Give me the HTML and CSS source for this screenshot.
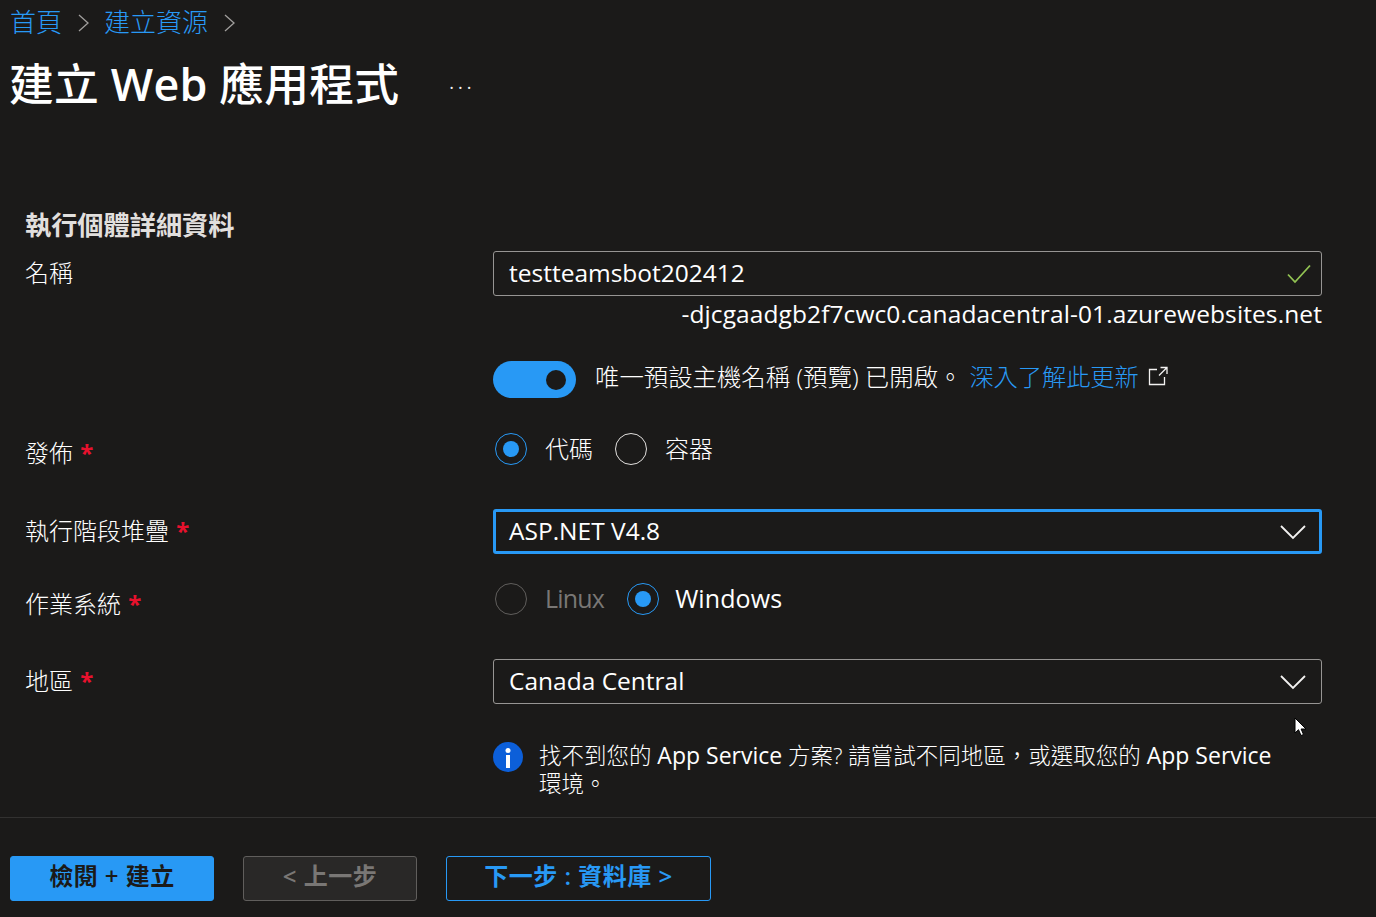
FILE: index.html
```html
<!DOCTYPE html>
<html lang="zh-Hant">
<head>
<meta charset="utf-8">
<title>建立 Web 應用程式</title>
<link rel="stylesheet" href="styles.css">
</head>
<body>
<div class="page">
  <nav class="crumbs">
    <a class="link">首頁</a>
    <svg class="crumb-sep" viewBox="0 0 11 18"><path d="M1 1 10 9 1 17"/></svg>
    <a class="link">建立資源</a>
    <svg class="crumb-sep" viewBox="0 0 11 18"><path d="M1 1 10 9 1 17"/></svg>
  </nav>
  <header class="title-row">
    <h1 class="title">建立 <span class="title-latin">Web</span> 應用程式</h1>
    <span class="more">···</span>
  </header>
  <main class="form">
    <h2 class="section">執行個體詳細資料</h2>
    <div class="row row-name">
      <div class="label">名稱</div>
      <div class="control">
        <div class="field"><span>testteamsbot202412</span>
          <svg class="check" viewBox="0 0 24 20"><path d="M1 10.500 8 18 23 1.500"/></svg>
        </div>
        <div class="host">-djcgaadgb2f7cwc0.canadacentral-01.azurewebsites.net</div>
      </div>
    </div>
    <div class="row row-toggle">
      <div class="label"></div>
      <div class="control toggle-line">
        <span class="toggle"><span class="knob"></span></span>
        <span class="toggle-text">唯一預設主機名稱 (預覽) 已開啟。</span>
        <a class="link learn">深入了解此更新</a>
        <svg class="ext" viewBox="0 0 20 20"><path d="M9 3.500H1.500v15h15V11M11 9.500 19 1.500M12.500 1.500H19V8"/></svg>
      </div>
    </div>
    <div class="row row-publish">
      <div class="label">發佈 <span class="req">*</span></div>
      <div class="control radios">
        <span class="radio on"></span><span class="radio-label code">代碼</span>
        <span class="radio"></span><span class="radio-label">容器</span>
      </div>
    </div>
    <div class="row row-stack">
      <div class="label">執行階段堆疊 <span class="req">*</span></div>
      <div class="control">
        <div class="field focus"><span>ASP.NET V4.8</span>
          <svg class="chev" viewBox="0 0 26 16"><path d="M1 2 13 14 25 2"/></svg>
        </div>
      </div>
    </div>
    <div class="row row-os">
      <div class="label">作業系統 <span class="req">*</span></div>
      <div class="control radios">
        <span class="radio off"></span><span class="radio-label latin disabled">Linux</span>
        <span class="radio on"></span><span class="radio-label latin">Windows</span>
      </div>
    </div>
    <div class="row row-region">
      <div class="label">地區 <span class="req">*</span></div>
      <div class="control">
        <div class="field"><span>Canada Central</span>
          <svg class="chev" viewBox="0 0 26 16"><path d="M1 2 13 14 25 2"/></svg>
        </div>
      </div>
    </div>
    <div class="row row-info">
      <div class="label"></div>
      <div class="control info">
        <svg class="info-icon" viewBox="0 0 30 30"><circle cx="15" cy="15" r="15"/><circle class="i" cx="15" cy="8.500" r="2.500"/><rect class="i" x="13" y="13" width="4" height="13"/></svg>
        <p class="info-text">找不到您的 <span class="info-latin">App Service</span> 方案? 請嘗試不同地區，或選取您的 <span class="info-latin">App Service</span> 環境。</p>
      </div>
    </div>
  </main>
  <footer class="footer">
    <button class="btn primary">檢閱 + 建立</button>
    <button class="btn back">&lt; 上一步</button>
    <button class="btn next">下一步 : 資料庫 &gt;</button>
  </footer>
</div>
<svg class="cursor" viewBox="0 0 13 20"><path d="M1 1v15l3.500-3.300L7 18.500l2.500-1-2.400-5.500H12z"/></svg>
</body>
</html>
```
FILE: styles.css
```css
* { box-sizing: border-box; }
html, body { margin: 0; padding: 0; background: #1b1a19; }
body {
  position: relative;
  width: 1376px;
  height: 917px;
  overflow: hidden;
  color: #fff;
  font-family: "Open Sans", "Noto Sans CJK TC", sans-serif;
  font-size: 24px;
}
.page { display: flex; flex-direction: column; height: 917px; }
.link { color: #2899f5; }

.crumbs { display: flex; align-items: center; height: 44px; padding: 0 0 3px 10px; font-size: 26px; font-weight: 300; }
.crumb-sep { width: 11px; height: 18px; margin: 4px 15px 0 16px; fill: none; stroke: #a19f9d; stroke-width: 1.300; }

.title-row { display: flex; align-items: center; height: 80px; padding-left: 9px; }
.title { margin: 0; font-size: 44.800px; font-weight: 500; color: #fff; line-height: 80px; letter-spacing: 0.200px; }
.title-latin { font-weight: 600; }
.more { margin: 5px 0 0 50px; font-size: 18px; letter-spacing: 4px; color: #f3f2f1; }

.form { flex: 1; padding: 83px 54px 0 25px; }
.section { margin: 0; font-size: 26.200px; line-height: 36px; font-weight: 700; color: #e1dfdd; }

.row { display: grid; grid-template-columns: 468px 829px; }
.label { line-height: 34px; font-weight: 300; }
.req { color: #e8112d; margin-left: 1px; font-weight: 700; }

.field {
  display: flex;
  align-items: center;
  justify-content: space-between;
  height: 45px;
  padding: 0 16px 3px 15px;
  border: 1px solid #979593;
  border-radius: 3px;
  font-size: 24.500px;
  color: #fff;
}
.field.focus { border: 3px solid #2899f5; padding: 0 14px 2px 13px; }
.check { width: 24px; height: 20px; margin: 3px -6px 0 0; fill: none; stroke: #92c353; stroke-width: 1.800; }
.chev { width: 26px; height: 16px; margin: 3px -1px 0 0; fill: none; stroke: #f3f2f1; stroke-width: 1.800; }
.field.focus .chev { margin: 2px -1px 0 0; }

.row-name { margin-top: 8px; }
.row-name .label { padding-top: 5px; }
.host { line-height: 36px; text-align: right; font-size: 24.500px; letter-spacing: 0.100px; }

.row-toggle { margin-top: 29px; }
.toggle-line { display: flex; align-items: center; height: 37px; }
.toggle { display: flex; align-items: center; justify-content: flex-end; width: 83px; height: 37px; padding-right: 10px; border-radius: 19px; background: #2899f5; }
.knob { width: 20px; height: 20px; border-radius: 50%; background: #1b1a19; }
.toggle-text { margin: 0 0 8px 19px; font-size: 24.400px; font-weight: 300; }
.learn { margin: 0 0 8px 7px; font-weight: 300; font-size: 24.200px; }
.ext { width: 20px; height: 20px; margin: 0 0 8px 9px; fill: none; stroke: #f3f2f1; stroke-width: 1.300; }

.radios { display: flex; align-items: center; padding-left: 2px; }
.radio { position: relative; flex: none; width: 32px; height: 32px; border: 1px solid #e1dfdd; border-radius: 50%; }
.radio.on { border-color: #2899f5; }
.radio.on::after { content: ""; position: absolute; left: 7px; top: 7px; width: 16px; height: 16px; border-radius: 50%; background: #2899f5; }
.radio.off { border-color: #605e5c; }
.radio-label { margin: 0 22px 0 18px; padding-bottom: 2px; font-weight: 300; }
.radio-label.latin { margin-left: 16px; font-size: 25px; font-weight: 400; letter-spacing: 0.100px; }
.radio-label.latin.disabled { margin: 0 23px 0 18px; color: #797775; letter-spacing: -0.800px; }

.row-publish { margin-top: 34px; }
.row-publish .label { padding-top: 4px; }
.row-publish .radios { height: 33px; }
.row-stack { margin-top: 39px; }
.row-stack .label { padding-top: 5px; }
.row-os { margin-top: 28px; }
.row-os .label { padding-top: 5px; }
.row-os .radios { height: 33px; }
.row-region { margin-top: 38px; }
.row-region .label { padding-top: 5px; }

.row-info { margin-top: 36px; }
.info { display: flex; align-items: flex-start; }
.info-icon { flex: none; width: 30px; height: 30px; margin-top: 2px; fill: #0c5fd9; }
.info-icon .i { fill: #fff; }
.info-text { margin: 0 0 0 16px; padding-top: 2px; width: 745px; font-size: 22.500px; line-height: 27.500px; font-weight: 300; }
.info-latin { font-size: 23px; line-height: 1; font-weight: 400; }

.footer { display: flex; flex: none; height: 100px; padding: 38px 0 0 10px; border-top: 1px solid #323130; }
.btn { height: 45px; padding: 0 0 5px; border-radius: 3px; font-family: inherit; font-size: 24px; font-weight: 600; line-height: 36px; letter-spacing: 0.500px; }
.primary { width: 204px; border: 1px solid #2899f5; background: #2899f5; color: #1b1a19; }
.back { width: 174px; margin-left: 29px; border: 1px solid #605e5c; background: #292827; color: #797775; }
.next { width: 265px; margin-left: 29px; border: 1px solid #2899f5; background: #1b1a19; color: #2899f5; }

.cursor { position: absolute; left: 1294px; top: 717px; width: 13px; height: 20px; fill: #fff; stroke: #000; stroke-width: 1; }
```
